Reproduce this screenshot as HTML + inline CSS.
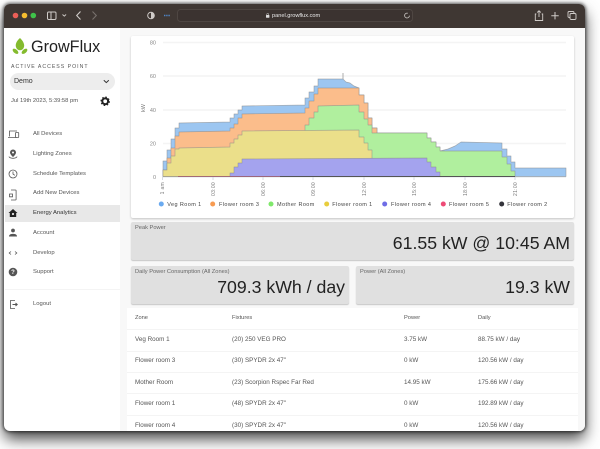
<!DOCTYPE html>
<html><head><meta charset="utf-8"><style>
html,body{margin:0;padding:0;background:#fff;width:600px;height:449px;overflow:hidden;font-family:"Liberation Sans",sans-serif}
#r{position:absolute;left:0;top:0;width:600px;height:449px;overflow:hidden;background:#fff;filter:blur(.3px)}
#w{position:absolute;left:4px;top:4px;width:581px;height:427px;border-radius:6px;background:#fff;box-shadow:0 8px 15px rgba(0,0,0,.72),0 0 3px 1px rgba(0,0,0,.6);overflow:hidden}
.a{position:absolute;white-space:nowrap}
.n{position:absolute;left:33px;font-size:5.9px;line-height:8px;color:#555;white-space:nowrap}
.c{position:absolute;background:#e0e0e0;border-radius:2px;box-shadow:0 1px 1px rgba(0,0,0,.2)}
.l{position:absolute;left:4px;top:3px;font-size:5.700px;line-height:7px;color:#666;white-space:nowrap}
.v{position:absolute;color:#222;white-space:nowrap;line-height:20px}
.t{position:absolute;font-size:6.300px;line-height:8px;color:#555;white-space:nowrap}
.h{position:absolute;left:127px;width:451px;height:1.4px;background:#f4f4f4}
svg{position:absolute;left:0;top:0}
</style></head><body><div id="r">
<div id="w"></div>
<div class="a" style="left:4px;top:4px;width:581px;height:24px;background:#3f3733;border-radius:6px 6px 0 0"></div>
<div class="a" style="left:120px;top:28px;width:465px;height:403px;background:#f8f8f8;border-radius:0 0 6px 0"></div>
<div class="a" style="left:127px;top:308px;width:451px;height:123px;background:#fff"></div>
<div class="a" style="left:131px;top:36px;width:443px;height:182px;background:#fff;border-radius:2px;box-shadow:0 1px 2px rgba(0,0,0,.22)"></div>
<div class="a" style="left:5px;top:205px;width:115px;height:17px;background:#e8e8e8"></div>
<div class="a" style="left:5px;top:289px;width:115px;height:1px;background:#f4f4f4"></div>
<div class="a" style="left:10px;top:73px;width:105px;height:17px;border-radius:9px;background:#ededed"></div>

<svg width="600" height="449" viewBox="0 0 600 449">
<circle cx="15.5" cy="15.5" r="2.8" fill="#ec5f57"/><circle cx="24.5" cy="15.5" r="2.8" fill="#f5bd2f"/><circle cx="33.3" cy="15.5" r="2.8" fill="#3fc34a"/>
<g fill="none" stroke="#cfcbc8" stroke-width="1">
<rect x="47.5" y="12" width="8.5" height="7.5" rx="1.2"/><path d="M51 12v7.5"/>
<path d="M62.5 14.5l1.8 1.6 1.8-1.6" stroke-width=".9"/>
<path d="M80.5 11.5l-3.8 4 3.8 4" stroke-width="1.1"/>
<path d="M92.5 11.5l3.8 4-3.8 4" stroke="#77706c" stroke-width="1.1"/>
<rect x="177.5" y="9.5" width="235" height="12" rx="3" stroke="#4e4642" fill="#3b3330"/>
<circle cx="151" cy="15.5" r="3.3"/>
<path d="M407.8 13.3a2.4 2.4 0 1 0 1.6 2.3" stroke-width=".8"/>
<path d="M536.3 14h-1v6.5h7.4V14h-1M539 17V10.8M537.2 12.5l1.8-1.8 1.8 1.8" stroke-width=".9"/>
<path d="M555 12v7.4M551.3 15.7h7.4" stroke-width="1"/>
<rect x="568" y="11.5" width="6" height="6" rx="1.2" stroke-width=".9"/><rect x="570" y="13.5" width="6" height="6" rx="1.2" stroke-width=".9" fill="#3f3733"/>
</g>
<path d="M151 12.2v6.6a3.3 3.3 0 0 0 0-6.6z" fill="#cfcbc8"/>
<path d="M164 15.5h6.5" stroke="#4f86c6" stroke-width="1.5" stroke-dasharray="1.4 .8"/>
<rect x="266" y="15" width="3.4" height="2.8" rx=".5" fill="#ddd"/><path d="M266.8 15v-.8a.9.9 0 0 1 1.8 0v.8" stroke="#ddd" stroke-width=".5" fill="none"/>

<!-- logo -->
<path d="M20 38c-3.800 3.200-5.200 7-3.600 10 .7 1.400 2 2.300 3.600 2.300s2.900-.9 3.600-2.300c1.600-3-.2-6.800-3.600-10z" fill="#84bb2e"/>
<ellipse cx="15.500" cy="51.300" rx="3.400" ry="1.900" transform="rotate(40 15.500 51.300)" fill="#84bb2e"/>
<ellipse cx="24.500" cy="51.300" rx="3.400" ry="1.900" transform="rotate(-40 24.500 51.300)" fill="#84bb2e"/>
<path d="M103.800 80.300l2.500 2.300 2.500-2.300" fill="none" stroke="#333" stroke-width="1"/>
<circle cx="105.200" cy="101.300" r="2.900" fill="none" stroke="#222" stroke-width="2"/>
<circle cx="105.200" cy="101.300" r="4.100" fill="none" stroke="#222" stroke-width="1.300" stroke-dasharray="1.500 1.720"/>

<g fill="none" stroke="#555" stroke-width=".8">
<path d="M8 137.500h9M9.500 136.500v-5.500h7.500"/><rect x="15.500" y="132.500" width="3.200" height="5" rx=".5" fill="#fff"/>
<path d="M9 156.500a4 1.800 0 0 0 8 0"/>
<circle cx="13" cy="174" r="4"/><path d="M13 171.500V174l1.800 1.300"/>
<path d="M11 190h4.500a.6.600 0 0 1 .6.600v8.800a.6.600 0 0 1-.6.600H11"/><path d="M9.500 194h3v2.800h-3z"/>
<path d="M11 251.500l-1.800 1.500 1.800 1.500M15 251.500l1.800 1.500-1.800 1.500"/>
<path d="M15 300.500h-4.500v8H15"/>
</g>
<path d="M13 149.500a3 3 0 0 1 3 3c0 2-3 4.500-3 4.500s-3-2.500-3-4.500a3 3 0 0 1 3-3z" fill="#555"/><circle cx="13" cy="152.500" r="1" fill="#fff"/>
<path d="M13 209l-4.500 4h1.300v4h6.400v-4h1.300z" fill="#222"/><circle cx="13" cy="214" r="1.100" fill="#e8e8e8"/>
<circle cx="13" cy="230.500" r="1.900" fill="#555"/><path d="M9 236.500c0-2 2-2.600 4-2.600s4 .6 4 2.600z" fill="#555"/>
<circle cx="13" cy="272" r="4.300" fill="#555"/><text x="13" y="274.200" font-size="6" font-weight="700" fill="#fff" text-anchor="middle" font-family="Liberation Sans">?</text>
<path d="M12.500 304.500h4.500M15.500 303l1.700 1.500-1.700 1.500" fill="none" stroke="#555" stroke-width="1"/>

<g stroke="#f4f4f4" stroke-width="1.500"><path d="M163 42.500H566M163 76H566M163 110H566M163 143.500H566"/></g>
<path d="M163 177H566" stroke="#dfe4ea" stroke-width="1"/>
<g stroke="#ccd3dc" stroke-width=".8"><path d="M162.500 177v3M213 177v3M263 177v3M313 177v3M364 177v3M414 177v3M465 177v3M515 177v3"/></g>
<g font-family="Liberation Sans" font-size="5.500" fill="#888" text-anchor="end">
<text x="156" y="44.500">80</text><text x="156" y="78">60</text><text x="156" y="112">40</text><text x="156" y="145.500">20</text><text x="156" y="179">0</text></g>
<text transform="translate(145 112) rotate(-90)" font-family="Liberation Sans" font-size="5.500" fill="#777">kW</text>
<g font-family="Liberation Sans" font-size="5" fill="#777" text-anchor="end" letter-spacing=".3">
<text transform="translate(164 182) rotate(-90)">1 am</text>
<text transform="translate(215 182) rotate(-90)">03:00</text>
<text transform="translate(265 182) rotate(-90)">06:00</text>
<text transform="translate(315 182) rotate(-90)">09:00</text>
<text transform="translate(366 182) rotate(-90)">12:00</text>
<text transform="translate(416 182) rotate(-90)">15:00</text>
<text transform="translate(467 182) rotate(-90)">18:00</text>
<text transform="translate(517 182) rotate(-90)">21:00</text></g>

<g stroke="#8a8a8a" stroke-opacity=".65" stroke-width=".7" stroke-linejoin="round">
<polygon fill="#9cc6f1" points="163,176.500 163,161 167,161 167,150 171,150 171,139 175,139 175,128 179,128 179,123 230,122 230,118 234,118 234,114 238,114 238,110 242,110 242,106 305,105 305,98 309,98 309,92 314,92 314,86 318,86 318,79 343,79 346,82 350,83 354,86 359,88 359,95 364,95 364,103 368,103 368,118 372,118 372,128 377,128 377,133 427,133 427,138 431,138 431,142 436,142 436,147 440,147 440,151 448,149 455,146 461,142 502,143 502,149 507,149 507,156 511,156 511,162 515,162 515,168 566,168 566,176.500"/>
<polygon fill="#fbbd8b" points="163,176.500 163,170 167,170 167,158 171,158 171,148 175,148 175,136 179,136 179,132 230,131 230,128 234,128 234,124 238,124 238,118 242,118 242,114 305,113 305,108 309,108 309,101 314,101 314,94 318,94 318,88 359,88 359,95 364,95 364,103 368,103 368,118 372,118 372,128 377,128 377,133 380,176.500"/>
<polygon fill="#b0ef9e" points="305,176.500 305,125 309,125 309,118 314,118 314,112 318,112 318,106 359,105 359,112 364,112 364,119 368,119 368,125 372,125 372,133 427,133 427,138 431,138 431,142 436,142 436,147 440,147 440,151 502,151 502,157 507,157 507,164 511,164 511,171 515,171 515,176.500"/>
<polygon fill="#ebdf8a" points="163,176.500 163,170 167,170 167,163 171,163 171,156 175,156 175,149 179,149 179,148 230,147 230,143 234,143 234,139 238,139 238,135 242,135 242,131 359,130 359,137 364,137 364,143 368,143 368,150 372,150 372,158 372,176.500"/>
<polygon fill="#a4a3ee" points="230,176.500 230,173 234,173 234,167 238,167 238,163 242,163 242,159 427,158 427,162 431,162 431,167 436,167 436,172 440,172 440,176.500"/>
</g>
<path d="M343 79v-6" stroke="#999" stroke-width=".8"/>
<path d="M178 176.500H280" stroke="#a0596e" stroke-width=".8"/>
<path d="M280 176.500H515" stroke="#555" stroke-width="1"/>

<g><circle cx="161.300" cy="204" r="2.500" fill="#6aaaf0"/><circle cx="212.700" cy="204" r="2.500" fill="#f79b52"/><circle cx="271" cy="204" r="2.500" fill="#7fe86b"/><circle cx="326.700" cy="204" r="2.500" fill="#e8cd3d"/><circle cx="384.700" cy="204" r="2.500" fill="#6f6de6"/><circle cx="443.300" cy="204" r="2.500" fill="#ee4a76"/><circle cx="501.700" cy="204" r="2.500" fill="#33333a"/></g>
<g font-family="Liberation Sans" font-size="5.500" fill="#444" letter-spacing=".4">
<text x="167.300" y="206">Veg Room 1</text><text x="219" y="206">Flower room 3</text><text x="277" y="206">Mother Room</text><text x="332.300" y="206">Flower room 1</text><text x="391" y="206">Flower room 4</text><text x="449" y="206">Flower room 5</text><text x="507.300" y="206">Flower room 2</text></g>
</svg>

<div class="a" style="left:272px;top:12px;font-size:5.600px;line-height:8px;color:#e8e8e8">panel.growflux.com</div>
<div class="a" style="left:31px;top:36px;font-size:16.200px;line-height:22px;color:#222">GrowFlux</div>
<div class="a" style="left:11px;top:63px;font-size:5.200px;line-height:8px;letter-spacing:1px;color:#555">ACTIVE ACCESS POINT</div>
<div class="a" style="left:14px;top:77px;font-size:7px;line-height:9px;color:#333">Demo</div>
<div class="a" style="left:11px;top:97px;font-size:5.800px;line-height:8px;color:#555">Jul 19th 2023, 5:39:58 pm</div>

<div class="n" style="top:130px">All Devices</div>
<div class="n" style="top:150px">Lighting Zones</div>
<div class="n" style="top:170px">Schedule Templates</div>
<div class="n" style="top:189px">Add New Devices</div>
<div class="n" style="top:209px;color:#333">Energy Analytics</div>
<div class="n" style="top:229px">Account</div>
<div class="n" style="top:249px">Develop</div>
<div class="n" style="top:268px">Support</div>
<div class="n" style="top:300px">Logout</div>

<div class="c" style="left:131px;top:222px;width:443px;height:38px"><div class="l">Peak Power</div><div class="v" style="right:4px;top:11px;font-size:17.700px">61.55 kW @ 10:45 AM</div></div>
<div class="c" style="left:131px;top:266px;width:218px;height:38px"><div class="l">Daily Power Consumption (All Zones)</div><div class="v" style="right:4px;top:11px;font-size:17.700px">709.3 kWh / day</div></div>
<div class="c" style="left:356px;top:266px;width:218px;height:38px"><div class="l">Power (All Zones)</div><div class="v" style="right:4px;top:11px;font-size:17.700px">19.3 kW</div></div>

<div class="h" style="top:329px"></div><div class="h" style="top:350.500px"></div><div class="h" style="top:372px"></div><div class="h" style="top:393px"></div><div class="h" style="top:414.500px"></div>
<div class="t" style="left:135px;top:314px;font-size:5.700px">Zone</div><div class="t" style="left:232px;top:314px;font-size:5.700px">Fixtures</div><div class="t" style="left:404px;top:314px;font-size:5.700px">Power</div><div class="t" style="left:478px;top:314px;font-size:5.700px">Daily</div>
<div class="t" style="left:135px;top:336px">Veg Room 1</div><div class="t" style="left:232px;top:336px">(20) 250 VEG PRO</div><div class="t" style="left:404px;top:336px">3.75 kW</div><div class="t" style="left:478px;top:336px">88.75 kW / day</div>
<div class="t" style="left:135px;top:357px">Flower room 3</div><div class="t" style="left:232px;top:357px">(30) SPYDR 2x 47"</div><div class="t" style="left:404px;top:357px">0 kW</div><div class="t" style="left:478px;top:357px">120.56 kW / day</div>
<div class="t" style="left:135px;top:379px">Mother Room</div><div class="t" style="left:232px;top:379px">(23) Scorpion Rspec Far Red</div><div class="t" style="left:404px;top:379px">14.95 kW</div><div class="t" style="left:478px;top:379px">175.66 kW / day</div>
<div class="t" style="left:135px;top:400px">Flower room 1</div><div class="t" style="left:232px;top:400px">(48) SPYDR 2x 47"</div><div class="t" style="left:404px;top:400px">0 kW</div><div class="t" style="left:478px;top:400px">192.89 kW / day</div>
<div class="t" style="left:135px;top:422px">Flower room 4</div><div class="t" style="left:232px;top:422px">(30) SPYDR 2x 47"</div><div class="t" style="left:404px;top:422px">0 kW</div><div class="t" style="left:478px;top:422px">120.56 kW / day</div>
</div></body></html>
